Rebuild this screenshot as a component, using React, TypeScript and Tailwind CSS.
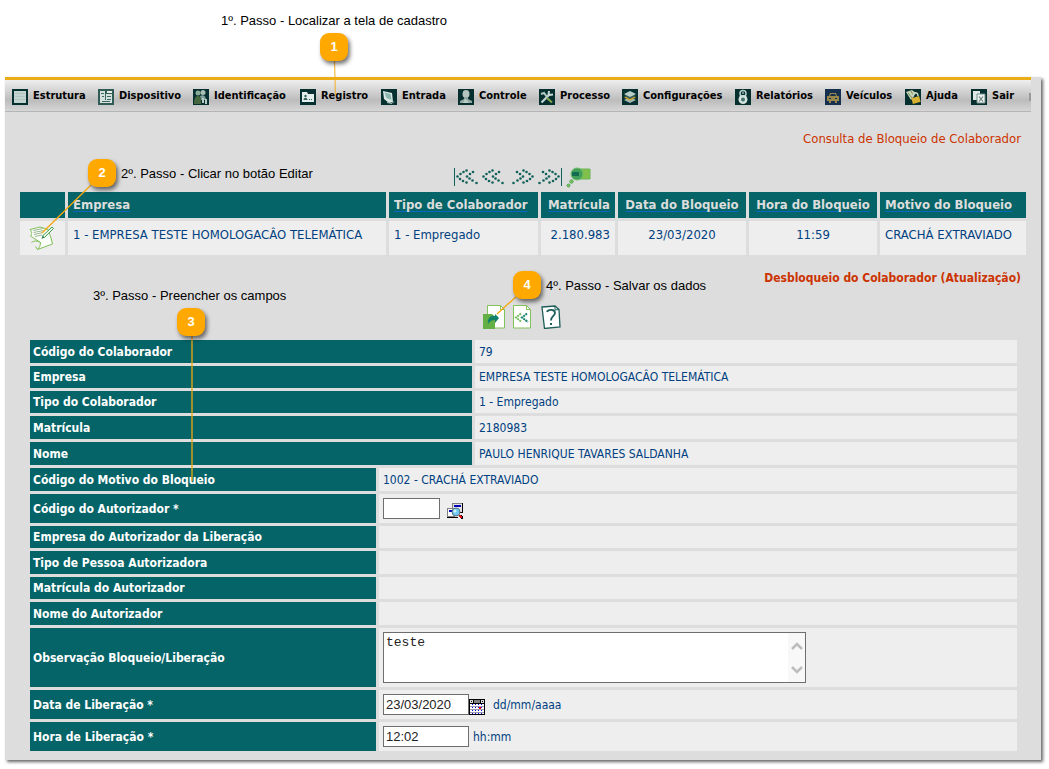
import type { ReactNode } from "react";

const ui = "font-['DejaVu_Sans_Condensed','Noto_Sans',sans-serif]";
const arial = "font-['Liberation_Sans',Arial,sans-serif]";

function MenuIcon({ bg = "#062f30", children }: { bg?: string; children: ReactNode }) {
  return (
    <svg viewBox="0 0 16 16" className="size-4 shrink-0" aria-hidden="true">
      <rect width="16" height="16" fill={bg} />
      {children}
    </svg>
  );
}

const menu: { label: string; icon: ReactNode }[] = [
  {
    label: "Estrutura",
    icon: (
      <MenuIcon>
        <rect x="2" y="2" width="12" height="12" fill="#c3d3cf" />
        <path d="M3 4.500h10M3 7.500h10M3 10.500h10" stroke="#b0c4bf" />
      </MenuIcon>
    ),
  },
  {
    label: "Dispositivo",
    icon: (
      <MenuIcon bg="#315b55">
        <path d="M2 2h5v3h7v9H2z" fill="#d5e2dc" />
        <path d="M9 2h5v2H9z" fill="#e8f0ec" />
        <path d="M3 4.500h3M9 7.500h4M4 7.500h2M9 10.500h4M4 12.500h8M7.500 4v7" stroke="#3a6862" />
      </MenuIcon>
    ),
  },
  {
    label: "Identificação",
    icon: (
      <MenuIcon>
        <circle cx="5" cy="4" r="2.500" fill="#8ba999" />
        <circle cx="10" cy="3.500" r="2.500" fill="#a9bfb6" />
        <path d="M7 7c3-2 6 0 6 4H8z" fill="#82a09a" />
        <path d="M1 15c0-5 1-8 4-8s3 3 3 8z" fill="#46683f" />
        <path d="M9 9h2v5H9zM12 10h2v5h-2z" fill="#b9cbc7" />
      </MenuIcon>
    ),
  },
  {
    label: "Registro",
    icon: (
      <MenuIcon>
        <path d="M2 3h5l1 2h6v8H2z" fill="#e3efec" />
        <circle cx="5.500" cy="7" r="1.200" fill="#35605b" />
        <path d="M3.500 11c0-3 4-3 4 0zM9 10h1v1H9zM11 10h1v1h-1z" fill="#35605b" />
      </MenuIcon>
    ),
  },
  {
    label: "Entrada",
    icon: (
      <MenuIcon>
        <path d="M2 2l9 2 1 9-4 1-5-4z" fill="#d7e8e3" />
        <path d="M3.500 3.500l6 1.500 1 6-5-2z" fill="#8db8b0" />
        <path d="M6 13.500l5 1 2-2" fill="none" stroke="#a8c4bd" />
      </MenuIcon>
    ),
  },
  {
    label: "Controle",
    icon: (
      <MenuIcon>
        <ellipse cx="8" cy="5" rx="3.500" ry="4" fill="#b5c5c0" />
        <path d="M6 8h4v2l4 2v2H2v-2l4-2z" fill="#8fa8a1" />
        <path d="M7 10l2 1 2 3H5z" fill="#b9cbc6" />
      </MenuIcon>
    ),
  },
  {
    label: "Processo",
    icon: (
      <MenuIcon>
        <path d="M2.500 13.500l8-8" stroke="#c6d9d5" strokeWidth="2.200" />
        <path d="M10 2l-.5 4L14 5.500" fill="none" stroke="#c6d9d5" strokeWidth="2" />
        <path d="M2 5l3-1 3 4" fill="none" stroke="#b4cbc6" strokeWidth="2" />
        <path d="M8 9l5 4.500" stroke="#80a54d" strokeWidth="2.200" />
      </MenuIcon>
    ),
  },
  {
    label: "Configurações",
    icon: (
      <MenuIcon>
        <path d="M2 11l6 3 6-3-6-3z" fill="#9fb7ae" />
        <path d="M2 8.500l6 3 6-3-6-3z" fill="#d5a229" />
        <path d="M2 7l6 3 6-3-6-3z" fill="#365d58" />
        <path d="M2 5l6 3 6-3-6-3z" fill="#b7cfc8" />
      </MenuIcon>
    ),
  },
  {
    label: "Relatórios",
    icon: (
      <MenuIcon>
        <circle cx="8" cy="4.500" r="3" fill="none" stroke="#b7d0ca" strokeWidth="1.500" />
        <circle cx="8" cy="10.500" r="4.500" fill="#d3e1dd" />
        <circle cx="8" cy="10.500" r="2" fill="#45716b" />
        <circle cx="8" cy="4" r="1" fill="#8eb0a9" />
      </MenuIcon>
    ),
  },
  {
    label: "Veículos",
    icon: (
      <MenuIcon bg="#14304e">
        <path d="M5 4h6l1 3h2v5h-2v2h-2v-2H6v2H4v-2H2V7h2z" fill="#98874a" />
        <path d="M6 5h4l1 2H5zM4 9h2v1H4zM10 9h2v1h-2z" fill="#14304e" />
      </MenuIcon>
    ),
  },
  {
    label: "Ajuda",
    icon: (
      <MenuIcon>
        <path d="M1 3l6-2 4 3-5 7z" fill="#c9d4b0" />
        <path d="M3 4l4 5M6 2l2 4" stroke="#6f8d69" />
        <path d="M7 8h8v6H7z" fill="#d8b132" transform="rotate(-15 11 11)" />
        <path d="M8 8c-1-5 5-6 5-1" fill="none" stroke="#c9d5c4" strokeWidth="1.500" />
      </MenuIcon>
    ),
  },
  {
    label: "Sair",
    icon: (
      <MenuIcon>
        <path d="M2 2h7v3h4v9H6v-3H2z" fill="#dfe8e6" />
        <path d="M6 5v9h8V5z" fill="#edf3f1" stroke="#728f8a" />
        <path d="M8 7.500l4 5M12 7.500l-4 5" stroke="#637b79" strokeWidth="1.200" />
      </MenuIcon>
    ),
  },
];

const cols: { title: string; value: string; align: string }[] = [
  { title: "Empresa", value: "1 - EMPRESA TESTE HOMOLOGACÂO TELEMÁTICA", align: "text-left" },
  { title: "Tipo de Colaborador", value: "1 - Empregado", align: "text-left" },
  { title: "Matrícula", value: "2.180.983", align: "text-right" },
  { title: "Data do Bloqueio", value: "23/03/2020", align: "text-center" },
  { title: "Hora do Bloqueio", value: "11:59", align: "text-center" },
  { title: "Motivo do Bloqueio", value: "CRACHÁ EXTRAVIADO", align: "text-left" },
];

const dots = [
  [3.5, 8.5], [6.5, 6], [9.5, 4], [12.5, 2.5], [6, 11], [9, 13], [12.5, 14.5],
  [13, 8.5], [16, 6], [19, 4], [15.5, 10.5], [18.5, 12.500], [22.5, 15],
];

function Chevrons({ flip, bar }: { flip?: boolean; bar?: boolean }) {
  return (
    <svg viewBox="0 0 26 18" className="h-[18px] w-[26px]" aria-hidden="true">
      <g transform={flip ? "matrix(-1 0 0 1 26 0)" : undefined} fill="#12615a">
        {dots.map(([x, y]) => (
          <circle key={`${x}-${y}`} cx={x} cy={y} r="1.300" />
        ))}
        {bar && <path d="M0 0h1v18H0z" />}
      </g>
    </svg>
  );
}

function PagerIcons() {
  return (
    <div className="flex h-[18px] items-center justify-center pr-0.5">
      <button type="button" aria-label="Primeiro"><Chevrons bar /></button>
      <button type="button" aria-label="Anterior"><Chevrons /></button>
      <button type="button" aria-label="Próximo" className="ml-1"><Chevrons flip /></button>
      <button type="button" aria-label="Último"><Chevrons flip bar /></button>
      <button type="button" aria-label="Pesquisar" className="ml-1">
        <svg viewBox="0 0 25 21" className="h-[21px] w-[25px]" aria-hidden="true">
          <path d="M12 2h12v10H12z" fill="#83c04b" stroke="#69b55a" />
          <circle cx="11" cy="7" r="6" fill="#42a05a" stroke="#6cbb68" />
          <path d="M6 5h7v4H6z" fill="#126c52" />
          <circle cx="5.500" cy="14.500" r="1.700" fill="#8bc453" stroke="#4ca55a" />
          <circle cx="2.500" cy="18.500" r="1.500" fill="#8bc453" stroke="#4ca55a" />
        </svg>
      </button>
    </div>
  );
}

function EditIcon() {
  return (
    <svg viewBox="0 0 26 26" className="size-[26px]" aria-hidden="true">
      <path d="M2 4.500L12 2l8 2.500 3 8.500 1.500 6-15 5.500c2-2 3-4 3-7L2.500 11c2-2 1-5-.5-6.500z" fill="#fbfdf9" stroke="#80be58" />
      <path d="M12.500 17.500c-3-2-6-2-9 0M9.500 24.500l-2-3" fill="none" stroke="#80be58" />
      <path d="M5 5.500l10-2M5.500 7.500l10-2M6 9.500l9-2M7 11.500l7-1.500" stroke="#9bb893" />
      <path d="M14.500 11l9.500-9 1.500 1.500-9 9z" fill="#eff5e7" stroke="#3e9d55" />
      <path d="M13.500 14l1-3 2 1.500z" fill="#2b7350" />
    </svg>
  );
}

function ToolbarIcons() {
  return (
    <div className="flex h-6 items-start justify-center pr-1">
      <button type="button" aria-label="Salvar">
        <svg viewBox="0 0 24 24" className="size-6" aria-hidden="true">
          <path d="M5.500.500h13l4 4v18.500h-17z" fill="#fff" stroke="#83c15a" />
          <path d="M18.500.500v4h4" fill="none" stroke="#83c15a" />
          <path d="M1 9h9l3 3v12H1z" fill="#65b046" />
          <path d="M6 19c-1-6 3-9 7-8V9l4 4-4 5v-3c-3 0-5 1-7 4z" fill="#128169" />
        </svg>
      </button>
      <button type="button" aria-label="Voltar" className="ml-[7px]">
        <svg viewBox="0 0 19 24" className="h-6 w-[19px]" aria-hidden="true">
          <path d="M.500.500h13l4 4v18.500H.500z" fill="#fff" stroke="#83c15a" />
          <path d="M13.500.500v4h4" fill="none" stroke="#83c15a" />
          <path d="M8 8.500l-5 4 5 4" fill="none" stroke="#76bd5b" strokeWidth="2" strokeDasharray="2 .7" />
          <path d="M14 8.500l-5 4 6 4.500" fill="none" stroke="#168069" strokeWidth="2" strokeDasharray="2 .7" />
        </svg>
      </button>
      <button type="button" aria-label="Ajuda" className="ml-[9px]">
        <svg viewBox="0 0 20 24" className="h-6 w-5" aria-hidden="true">
          <path d="M1 2L14 1l4 3.500 1 17.500-15.500 1.500z" fill="#fff" stroke="#1c5e5a" strokeWidth="1.300" />
          <path d="M14 1v4l4-.5" fill="none" stroke="#1c5e5a" />
          <path d="M6 7c1-3 8-3 8 1 0 3-4 3-4 7.500" fill="none" stroke="#1c5e5a" strokeWidth="1.800" />
          <path d="M9 18h2v2H9z" fill="#1c5e5a" />
        </svg>
      </button>
    </div>
  );
}

function LookupIcon() {
  return (
    <svg viewBox="0 0 17 16" className="h-4 w-[17px]" aria-hidden="true" shapeRendering="crispEdges">
      <path d="M5 0h11v10H5z" fill="#808080" />
      <path d="M6 1h9v8H6z" fill="#e4e4e4" />
      <path d="M7 2h7v2H7z" fill="#0000b8" />
      <path d="M15 0h1v10H9V9h6zM0 14h11v1H0z" fill="#000" />
      <path d="M0 5h8v9H0z" fill="#808080" />
      <path d="M1 6h6v7H1z" fill="#fff" />
      <path d="M2 7h4v2H2z" fill="#0000b8" />
      <circle cx="9" cy="9" r="4" fill="#6fc8ef" stroke="#5c7380" shapeRendering="auto" />
      <circle cx="8" cy="8" r="1.500" fill="#d8f5ff" shapeRendering="auto" />
      <path d="M12 12h2v1h1v2h-2v-1h-1z" fill="#e01010" />
      <path d="M14 12h1v1h1v3h-2v-1h1v-2h-1z" fill="#000" />
    </svg>
  );
}

function CalendarIcon() {
  return (
    <svg viewBox="0 0 16 16" className="size-4" aria-hidden="true" shapeRendering="crispEdges">
      <path d="M0 0h16v16H0z" fill="#000" />
      <path d="M1 5h14v10H1z" fill="#fff" />
      <path d="M5 1h6v3H5z" fill="#808080" />
      <path d="M1 1h3v3H1zM12 1h3v3h-3z" fill="#ddd" />
      <path d="M2 2h1v1H2zM13 2h1v1h-1z" fill="#000" />
      <path d="M1 7h14v1H1zM1 10h14v1H1zM1 13h14v1H1z" fill="#9a9ab0" />
      <path d="M3.500 5v10M6.500 5v10M9.500 5v10M12.500 5v10" stroke="#0000d0" strokeDasharray="1 2" />
      <path d="M10 8h2v2h-2z" fill="#f00" />
    </svg>
  );
}

function Row({
  label,
  htmlFor,
  height = "h-[23px]",
  grid = "grid-cols-[346px_1fr]",
  children,
}: {
  label: string;
  htmlFor?: string;
  height?: string;
  grid?: string;
  children?: ReactNode;
}) {
  const Tag = htmlFor ? "label" : "div";
  return (
    <div className={`grid gap-[3px] ${grid} ${height}`}>
      <Tag htmlFor={htmlFor} className="flex items-center bg-[#056467] pl-[3px] font-bold text-white">
        {label}
      </Tag>
      <div className="flex items-center bg-[#eee] pl-1 text-[#003f80]">{children}</div>
    </div>
  );
}

const wide = "grid-cols-[442px_1fr]";
const box = `h-[21px] border border-[#6e6e6e] bg-white px-0.5 text-[13px] text-[#222] outline-none ${arial}`;

const steps = [
  { n: 1, text: "1º. Passo - Localizar a tela de cadastro", badge: "left-[320px] top-[33px]", caption: "left-[221px] top-[13px]" },
  { n: 2, text: "2º. Passo - Clicar no botão Editar", badge: "left-[88px] top-[159px]", caption: "left-[121px] top-[166px]" },
  { n: 3, text: "3º. Passo - Preencher os campos", badge: "left-[177px] top-[308px]", caption: "left-[93px] top-[288px]" },
  { n: 4, text: "4º. Passo - Salvar os dados", badge: "left-[513px] top-[271px]", caption: "left-[546px] top-[278px]" },
];

function Callouts() {
  return (
    <div className={`pointer-events-none absolute inset-0 text-black ${arial}`}>
      <svg className="absolute inset-0 size-full" aria-hidden="true" stroke="#f5a70f" strokeWidth="1.300">
        <path d="M334.500 61L335.500 96" opacity="0.7" />
        <path d="M92 184L42 233" />
        <path d="M192 335V481" />
        <path d="M518 295L497 314" />
      </svg>
      {steps.map((s) => (
        <div key={s.n}>
          <div
            className={`absolute flex size-7 items-center justify-center rounded-[9px] bg-[#ffa800] text-[13px] font-bold text-white shadow-[2px_3px_4px_rgba(0,0,0,0.55)] ${s.badge}`}
          >
            {s.n}
          </div>
          <div className={`absolute text-[13px] leading-4 whitespace-nowrap ${s.caption}`}>{s.text}</div>
        </div>
      ))}
    </div>
  );
}

export default function App() {
  return (
    <div className={`relative bg-white pt-[77px] pr-2 pb-[9px] pl-[5px] text-[12px] ${ui}`}>
      <main className="bg-[#ddd] pb-[9px] shadow-[2px_2px_3px_rgba(0,0,0,0.6)]">
        <nav className="mr-2.5 flex h-[35px] items-center border-t-3 border-b border-t-[#ecac15] border-b-[#b5b5b5] bg-linear-to-b from-[#efefef] via-[#bcbcbc] via-65% to-[#d6d6d6] pt-0.5 pl-[7px] text-[11px] text-black">
          <ul className="grid grow grid-cols-[86px_95px_107px_81px_77px_81px_83px_113px_90px_80px_66px_1fr]">
            {menu.map((m) => (
              <li key={m.label}>
                <a href="#" className="flex items-center gap-[5px] font-bold whitespace-nowrap">
                  {m.icon}
                  {m.label}
                </a>
              </li>
            ))}
          </ul>
          <span className="h-2 w-0.5 bg-[#999]" />
        </nav>

        <h1 className="mt-[19px] pr-5 text-right text-[13px] leading-4 text-[#cc3300]">
          Consulta de Bloqueio de Colaborador
        </h1>
        <div className="mt-[21px]">
          <PagerIcons />
        </div>

        <div className="mt-[3px] pr-3 pl-3">
          <table className="w-full table-fixed border-separate border-spacing-[3px] text-[13px]">
            <colgroup>
              <col className="w-[45px]" />
              <col />
              <col className="w-[149px]" />
              <col className="w-[74px]" />
              <col className="w-[128px]" />
              <col className="w-[128px]" />
              <col className="w-[146px]" />
            </colgroup>
            <thead>
              <tr className="h-[26px] bg-[#056467] text-[#ddd]">
                <td />
                {cols.map((c) => (
                  <th key={c.title} scope="col" className={`px-[5px] py-0 whitespace-nowrap ${c.align}`}>
                    <a href="#" className="underline decoration-[#0a66c0] decoration-1 underline-offset-2">
                      {c.title}
                    </a>
                  </th>
                ))}
              </tr>
            </thead>
            <tbody>
              <tr className="h-[34px] bg-[#eee] text-[#003f80]">
                <td className="p-0 pl-2">
                  <button type="button" aria-label="Editar" className="block">
                    <EditIcon />
                  </button>
                </td>
                {cols.map((c) => (
                  <td key={c.title} className={`px-[5px] pt-1 pb-0 align-top whitespace-nowrap ${c.align}`}>
                    {c.value}
                  </td>
                ))}
              </tr>
            </tbody>
          </table>
        </div>

        <h2 className="mt-3 pr-5 text-right text-[12px] leading-4 font-bold text-[#cc3300]">
          Desbloqueio do Colaborador (Atualização)
        </h2>
        <div className="mt-[19px]">
          <ToolbarIcons />
        </div>

        <form className="mt-[11px] mr-6 ml-[25px] flex flex-col gap-[3px]">
          <Row label="Código do Colaborador" grid={wide}>79</Row>
          <Row label="Empresa" grid={wide} height="h-[22px]">EMPRESA TESTE HOMOLOGACÂO TELEMÁTICA</Row>
          <Row label="Tipo do Colaborador" grid={wide} height="h-[22px]">1 - Empregado</Row>
          <Row label="Matrícula" grid={wide}>2180983</Row>
          <Row label="Nome" grid={wide}>PAULO HENRIQUE TAVARES SALDANHA</Row>
          <Row label="Código do Motivo do Bloqueio">1002 - CRACHÁ EXTRAVIADO</Row>
          <Row label="Código do Autorizador *" htmlFor="autorizador" height="h-[29px]">
            <input id="autorizador" type="text" className={`w-[57px] ${box}`} />
            <button type="button" aria-label="Procurar autorizador" className="mt-1 ml-[7px]">
              <LookupIcon />
            </button>
          </Row>
          <Row label="Empresa do Autorizador da Liberação" height="h-[22px]" />
          <Row label="Tipo de Pessoa Autorizadora" />
          <Row label="Matrícula do Autorizador" height="h-[22px]" />
          <Row label="Nome do Autorizador" />
          <Row label="Observação Bloqueio/Liberação" htmlFor="obs" height="h-[59px]">
            <div className="flex h-[51px] w-[423px] border border-[#6e6e6e] bg-white">
              <textarea
                id="obs"
                defaultValue="teste"
                className="grow resize-none overflow-hidden px-0.5 pt-0.5 font-['Liberation_Mono',monospace] text-[13px] leading-4 text-[#222] outline-none"
              />
              <div className="flex w-[17px] flex-col items-center justify-between bg-[#f8f8f8] pt-2 pb-[7px]">
                <svg viewBox="0 0 12 10" className="h-2.5 w-3" aria-hidden="true">
                  <path d="M1 8l5-5 5 5" fill="none" stroke="#bdbdbd" strokeWidth="2.500" />
                </svg>
                <svg viewBox="0 0 12 10" className="h-2.5 w-3" aria-hidden="true">
                  <path d="M1 2l5 5 5-5" fill="none" stroke="#bdbdbd" strokeWidth="2.500" />
                </svg>
              </div>
            </div>
          </Row>
          <Row label="Data de Liberação *" htmlFor="data" height="h-[29px]">
            <input id="data" type="text" defaultValue="23/03/2020" className={`w-[86px] ${box}`} />
            <button type="button" aria-label="Abrir calendário" className="mt-1">
              <CalendarIcon />
            </button>
            <span className="ml-2">dd/mm/aaaa</span>
          </Row>
          <Row label="Hora de Liberação *" htmlFor="hora" height="h-[29px]">
            <input id="hora" type="text" defaultValue="12:02" className={`w-[86px] ${box}`} />
            <span className="ml-1">hh:mm</span>
          </Row>
        </form>
      </main>
      <Callouts />
    </div>
  );
}
